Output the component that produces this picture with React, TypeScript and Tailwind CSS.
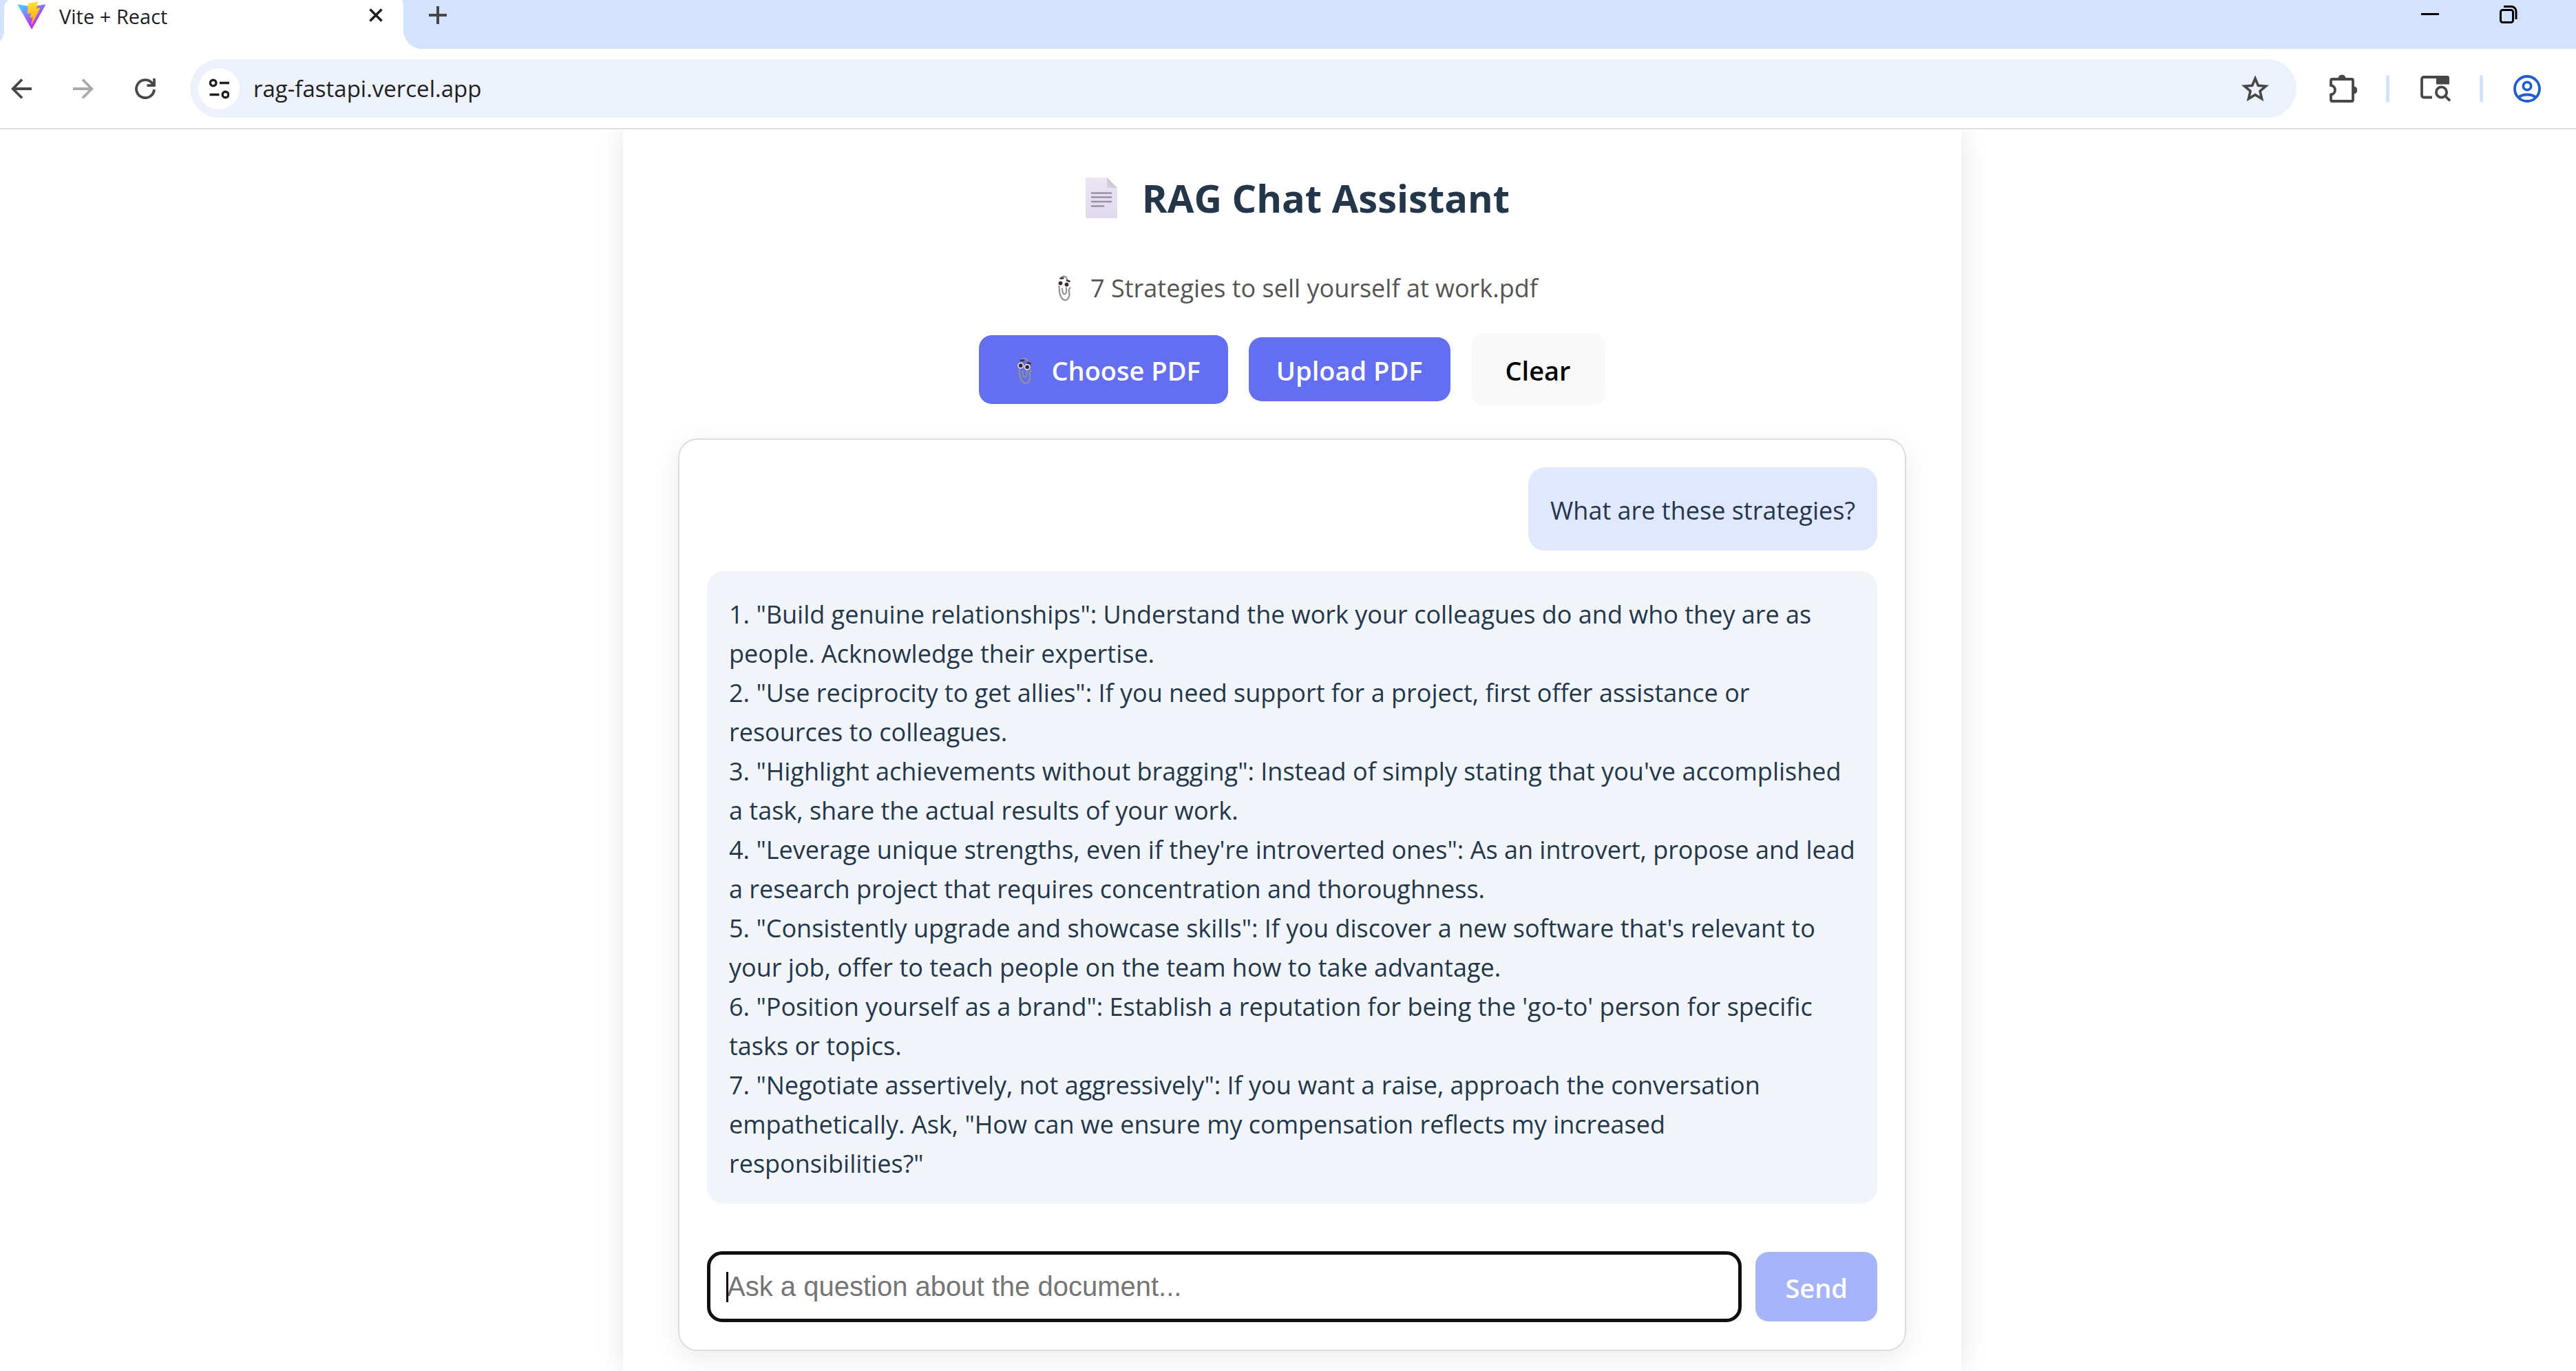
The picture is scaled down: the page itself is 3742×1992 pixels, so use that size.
import React from 'react';

const strategies = [
  `1. "Build genuine relationships": Understand the work your colleagues do and who they are as people. Acknowledge their expertise.`,
  `2. "Use reciprocity to get allies": If you need support for a project, first offer assistance or resources to colleagues.`,
  `3. "Highlight achievements without bragging": Instead of simply stating that you've accomplished a task, share the actual results of your work.`,
  `4. "Leverage unique strengths, even if they're introverted ones": As an introvert, propose and lead a research project that requires concentration and thoroughness.`,
  `5. "Consistently upgrade and showcase skills": If you discover a new software that's relevant to your job, offer to teach people on the team how to take advantage.`,
  `6. "Position yourself as a brand": Establish a reputation for being the 'go-to' person for specific tasks or topics.`,
  `7. "Negotiate assertively, not aggressively": If you want a raise, approach the conversation empathetically. Ask, "How can we ensure my compensation reflects my increased responsibilities?"`,
];

function ViteLogo() {
  return (
    <svg viewBox="0 0 256 257" className="h-10 w-10 shrink-0" aria-hidden="true">
      <defs>
        <linearGradient id="vite-a" x1="-.828%" x2="57.636%" y1="7.652%" y2="78.411%">
          <stop offset="0%" stopColor="#41D1FF" />
          <stop offset="100%" stopColor="#BD34FE" />
        </linearGradient>
        <linearGradient id="vite-b" x1="43.376%" x2="50.316%" y1="2.242%" y2="89.03%">
          <stop offset="0%" stopColor="#FFEA83" />
          <stop offset="8.333%" stopColor="#FFDD35" />
          <stop offset="100%" stopColor="#FFA800" />
        </linearGradient>
      </defs>
      <path fill="url(#vite-a)" d="M255.153 37.938L134.897 252.976c-2.483 4.44-8.862 4.466-11.382.048L.875 37.958c-2.746-4.814 1.371-10.646 6.827-9.67l120.385 21.517a6.537 6.537 0 0 0 2.322-.004l117.867-21.483c5.438-.991 9.574 4.796 6.877 9.62Z" />
      <path fill="url(#vite-b)" d="M185.432.063L96.44 17.501a3.268 3.268 0 0 0-2.634 3.014l-5.474 92.456a3.268 3.268 0 0 0 3.997 3.378l24.777-5.718c2.318-.535 4.413 1.507 3.936 3.838l-7.361 36.047c-.495 2.426 1.782 4.5 4.151 3.78l15.304-4.649c2.372-.72 4.652 1.36 4.15 3.788l-11.698 56.621c-.732 3.542 3.979 5.473 5.943 2.437l1.313-2.028l72.516-144.72c1.215-2.423-.88-5.186-3.54-4.672l-25.505 4.922c-2.396.462-4.435-1.77-3.759-4.114l16.646-57.705c.677-2.35-1.37-4.583-3.769-4.113Z" />
    </svg>
  );
}

function Paperclip({ className }: { className: string }) {
  return (
    <svg viewBox="0 0 20 38" className={className} fill="none" strokeLinecap="round" aria-hidden="true">
      <path d="M5 4.5C7 .5 13.5.5 14 6.500M2.500 15L3 24C4 31 7.500 36.500 12 36C17 35 18 29 17 24C16 20.500 17.500 19 18.500 18" stroke="#919193" strokeWidth="2.200" />
      <path d="M7 19L7.500 24C8.500 29 13 28 13 23.500V17" stroke="#919193" strokeWidth="2" />
      <circle cx="4.500" cy="11.500" r="4.300" fill="#e4e2e6" />
      <circle cx="13.500" cy="13.500" r="4.300" fill="#e4e2e6" />
      <circle cx="4.500" cy="11.500" r="2.700" fill="#3c2528" />
      <circle cx="13.500" cy="13.500" r="2.700" fill="#3c2528" />
      <path d="M4.500 4.500L8.500 4.200M14 7.500L17.500 8.800" stroke="#3f3438" strokeWidth="2.600" />
    </svg>
  );
}

function DocumentIcon() {
  return (
    <svg viewBox="0 0 46 59" className="h-[59px] w-[46px]" aria-hidden="true">
      <defs>
        <linearGradient id="doc" x1="0" x2="0" y1="0" y2="1">
          <stop offset="0" stopColor="#ece5f3" />
          <stop offset="1" stopColor="#e1d9ef" />
        </linearGradient>
        <linearGradient id="fold" x1="1" x2="0" y1="0" y2="1">
          <stop offset="0" stopColor="#bdb7c2" />
          <stop offset="1" stopColor="#dcd6e2" />
        </linearGradient>
      </defs>
      <path d="M1 0H31L46 15V58a1 1 0 0 1-1 1H1a1 1 0 0 1-1-1V1a1 1 0 0 1 1-1Z" fill="url(#doc)" />
      <path d="M31 0L46 15H33a2 2 0 0 1-2-2Z" fill="url(#fold)" />
      <path d="M9 22.500H37M9 28.500H37M9 35H37M9 41.500H26" stroke="#9a90a2" strokeWidth="2.500" strokeLinecap="round" />
    </svg>
  );
}

function TabStrip() {
  return (
    <div className="flex h-[71px] items-start bg-[#d3e3fd]">
      <svg viewBox="0 0 12 71" className="h-[71px] w-3 shrink-0" aria-hidden="true">
        <path d="M12 0C8 3 6 7 6 12V42C6 50 4 56 0 60V71H12Z" fill="#fff" />
      </svg>
      <div className="flex h-[71px] w-[572px] items-center bg-white pr-7 pb-7 pl-[14px]">
        <ViteLogo />
        <span className="ml-5 flex-1 pt-1 text-[29px] leading-8 text-[#1f1f1f]">Vite + React</span>
        <button aria-label="Close tab">
          <svg viewBox="0 0 20 20" className="h-5 w-5" aria-hidden="true">
            <path d="M1.500 1.500L18.500 18.500M18.500 1.500L1.500 18.500" stroke="#1f1f1f" strokeWidth="3.600" />
          </svg>
        </button>
      </div>
      <svg viewBox="0 0 28 71" className="h-[71px] w-7 shrink-0" aria-hidden="true">
        <path d="M0 0C1.500 4 2 7 2 12V42C2 58 12 70 28 71H0Z" fill="#fff" />
      </svg>
      <button aria-label="New tab" className="ml-[11px] flex h-[43px] items-center">
        <svg viewBox="0 0 26 26" className="h-[26px] w-[26px]" aria-hidden="true">
          <path d="M13 0V26M0 13H26" stroke="#474747" strokeWidth="4" />
        </svg>
      </button>
      <div className="flex-1" />
      <button aria-label="Minimize" className="flex h-10 w-[26px] items-center">
        <span className="h-[3px] w-full bg-black" />
      </button>
      <button aria-label="Restore" className="mr-[85px] ml-[88px] flex h-[41px] items-center">
        <svg viewBox="0 0 26 26" className="h-[26px] w-[26px]" fill="none" stroke="#000" strokeWidth="3" aria-hidden="true">
          <rect x="1.500" y="6.500" width="18" height="18" rx="3" />
          <path d="M6 1.500H17a7 7 0 0 1 7 7V20" />
        </svg>
      </button>
    </div>
  );
}

function Toolbar() {
  return (
    <div className="flex h-[117px] items-center border-b-2 border-[#e0e0e0] bg-white pr-[51px] pl-4">
      <div className="flex items-center gap-15">
        <button aria-label="Back">
          <svg viewBox="0 0 30 30" className="h-[30px] w-[30px]" fill="none" stroke="#474747" strokeWidth="3.800" aria-hidden="true">
            <path d="M30 15H3M16 1.500L2.700 15L16 28.500" />
          </svg>
        </button>
        <button aria-label="Forward" disabled>
          <svg viewBox="0 0 30 30" className="h-[30px] w-[30px]" fill="none" stroke="#aaaaaa" strokeWidth="3.800" aria-hidden="true">
            <path d="M0 15H27M14 1.500L27.300 15L14 28.500" />
          </svg>
        </button>
        <button aria-label="Reload">
          <svg viewBox="0 0 30 30" className="h-[30px] w-[30px]" fill="none" stroke="#474747" strokeWidth="3.800" aria-hidden="true">
            <path d="M28 16A13 13 0 1 1 25 6.800L27 10.200M28 0V10.200H17.500" />
          </svg>
        </button>
      </div>
      <div className="mr-12 ml-[50px] flex h-[85px] flex-1 items-center rounded-full bg-[#edf1fb] pr-10 pl-3">
        <button aria-label="View site information" className="flex size-15 items-center justify-center rounded-full bg-white">
          <svg viewBox="0 0 30 30" className="h-[30px] w-[30px]" fill="none" stroke="#1f1f1f" strokeWidth="3.400" aria-hidden="true">
            <circle cx="6.700" cy="6.500" r="4.300" />
            <path d="M16 6.500H30M1.500 23.500H15.500" />
            <circle cx="24.500" cy="23.500" r="4.300" />
          </svg>
        </button>
        <input
          aria-label="Address"
          defaultValue="rag-fastapi.vercel.app"
          className="ml-5 min-w-0 flex-1 bg-transparent text-[33px] leading-[60px] text-[#1f1f1f] outline-none"
        />
        <button aria-label="Bookmark this tab">
          <svg viewBox="0 0 40 40" className="size-10" fill="none" stroke="#474747" strokeWidth="3.600" aria-hidden="true">
            <path d="M20 5L24.300 15.300L35.500 16.200L27 23.500L29.600 34.500L20 28.600L10.400 34.500L13 23.500L4.500 16.200L15.700 15.300Z" />
          </svg>
        </button>
      </div>
      <button aria-label="Extensions">
        <svg viewBox="0 0 40 42" className="h-[42px] w-10" aria-hidden="true">
          <path d="M2 16V9a2 2 0 0 1 2-2H32a2 2 0 0 1 2 2V37a2 2 0 0 1-2 2H4a2 2 0 0 1-2-2V29.500a6.800 6.800 0 0 0 0-13.500Z" fill="none" stroke="#474747" strokeWidth="3.800" />
          <path d="M12.500 6a5.500 5.500 0 0 1 11 0ZM35 17.500a5.500 5.500 0 0 1 0 11Z" fill="#474747" />
        </svg>
      </button>
      <span className="mr-[45px] ml-[42px] h-10 w-[5px] rounded-full bg-[#d3e3fd]" />
      <button aria-label="Search tabs">
        <svg viewBox="0 0 44 38" className="h-[38px] w-11" fill="none" stroke="#474747" strokeWidth="3.800" aria-hidden="true">
          <path d="M17 31.500H5a3 3 0 0 1-3-3V5a3 3 0 0 1 3-3H30" />
          <path d="M23 0H39a3 3 0 0 1 3 3V12.500H23Z" fill="#474747" stroke="none" />
          <circle cx="30.500" cy="24" r="7.600" />
          <path d="M36 29.500L43 36.500" />
        </svg>
      </button>
      <span className="mr-11 ml-[42px] h-10 w-[5px] rounded-full bg-[#d3e3fd]" />
      <button aria-label="Profile">
        <svg viewBox="0 0 40 40" className="size-10" fill="none" stroke="#1f5bd1" strokeWidth="3.800" aria-hidden="true">
          <circle cx="20" cy="20" r="18" />
          <circle cx="20" cy="16" r="5.700" />
          <path d="M7 33C13 27 27 27 33 33" />
        </svg>
      </button>
    </div>
  );
}

export default function App() {
  return (
    <div className="flex h-screen flex-col overflow-hidden bg-white font-['Open_Sans',sans-serif]">
      <header>
        <TabStrip />
        <Toolbar />
      </header>
      <main className="flex flex-1 overflow-hidden pl-3">
        <div className="mx-auto flex w-full max-w-[1944px] flex-col bg-white px-20 pt-14 shadow-[0_0_40px_rgba(0,0,0,0.1)]">
          <h1 className="flex items-center justify-center gap-9 pl-4 text-[56px] leading-[86px] font-bold text-[#24364a]">
            <DocumentIcon />
            RAG Chat Assistant
          </h1>
          <p className="mt-15 flex items-center justify-center gap-7 pl-4 text-[36px] leading-[57px] text-[#555555]">
            <Paperclip className="h-[38px] w-5" />
            7 Strategies to sell yourself at work.pdf
          </p>
          <div className="mt-[37px] flex items-center justify-center gap-[30px] text-[38px] font-semibold">
            <button className="flex h-[100px] items-center gap-7 rounded-[19px] bg-[#636ef1] pt-1 pr-10 pl-14 text-white">
              <Paperclip className="h-10 w-[21px]" />
              Choose PDF
            </button>
            <button className="h-[93px] rounded-[19px] bg-[#636ef1] px-10 pt-1 text-white">Upload PDF</button>
            <button className="h-[105px] rounded-[19px] bg-[#f9f9f9] px-[50px] pt-1 text-black">Clear</button>
          </div>
          <section className="mt-12 flex flex-col rounded-[28px] border-2 border-[#dddddd] bg-white p-10 shadow-[0_10px_40px_rgba(0,0,0,0.08)]">
            <div className="flex flex-col gap-[30px] text-[36px] leading-[57px] text-[#24364a]">
              <p className="self-end rounded-[24px] bg-[#e0e7ff] px-8 pt-[34px] pb-[30px]">What are these strategies?</p>
              <div className="rounded-[24px] bg-[#f1f5fa] px-8 pt-[34px] pb-[30px]">
                {strategies.map((item) => (
                  <p key={item}>{item}</p>
                ))}
              </div>
            </div>
            <form className="mt-[69px] flex gap-5" onSubmit={(event) => event.preventDefault()}>
              <div className="relative flex-1">
                <input
                  aria-label="Question"
                  placeholder="Ask a question about the document..."
                  className="h-[103px] w-full rounded-[22px] border-5 border-[#101010] px-6 font-['Liberation_Sans',sans-serif] text-[40px] text-black caret-transparent outline-none placeholder:text-[#757575]"
                />
                <span className="absolute top-[30px] left-[28px] h-11 w-[3px] bg-black" />
              </div>
              <button type="submit" className="h-[101px] self-center rounded-[19px] bg-[#a6b4fc] px-[43px] pt-1 text-[38px] font-semibold text-white">
                Send
              </button>
            </form>
          </section>
        </div>
      </main>
    </div>
  );
}
